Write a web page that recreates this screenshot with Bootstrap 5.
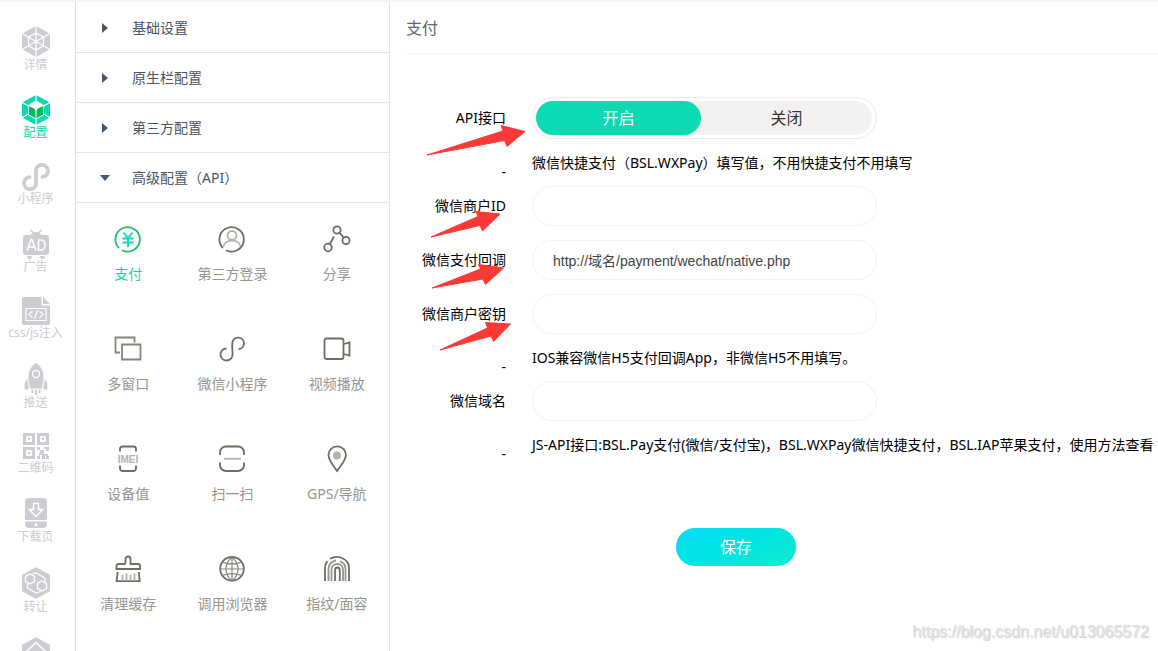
<!DOCTYPE html>
<html lang="zh-CN">
<head>
<meta charset="utf-8">
<meta name="viewport" content="width=device-width, initial-scale=1">
<title>支付</title>
<link rel="stylesheet" href="https://cdn.jsdelivr.net/npm/bootstrap@5.3.0/dist/css/bootstrap.min.css">
<style>
body{font-family:"Noto Sans","Noto Sans CJK SC",sans-serif;font-size:14px;line-height:20px;color:#000;background:#fff;font-kerning:none}
a{text-decoration:none}
svg{display:block}
.shell{border-top:2px solid #f5f5f5}
.rail{width:76px;border-right:1px solid #dcdce0;padding:24px 4px 0 0}
.rail-link{color:#cdccd2;font-size:12px;line-height:16px;margin-bottom:22px;white-space:nowrap}
.rail-link.active{color:#0cdab3}
.panel{width:314px;border-right:1px solid #e5e5e5}
.group-list{padding-top:1px}
.group-btn{height:50px;border:0;border-bottom:1px solid #e5e5e3;background:none;color:#475669;padding-left:24px}
.group-btn svg{width:12px;margin-right:20px}
.tool{height:110px;padding-top:22px;color:#97958f}
.tool svg{margin-bottom:11px;stroke:#6f6c64;fill:none;stroke-width:1.8}
.tool.active{color:#13d3b5}
.content{padding-left:16px}
.page-title{font-size:16px;line-height:24px;color:#666;font-weight:400;padding:14px 0;border-bottom:1px solid #f0f0f0;height:52px}
.pay-form{padding-top:43px}
.line{gap:26px}
.line-label{width:100px}
.field{width:345px;height:40px;border:1px solid #f1f1f1;border-radius:20px;padding:0 20px;font-family:"Liberation Sans","Noto Sans CJK SC",sans-serif;font-size:14px;color:#444}
.field-line{margin-bottom:14px}
.field-line.tight{margin-bottom:0}
.hint{height:47px}
.hint-dash{margin-bottom:4px}
.switch-box{width:345px;height:42px;border:1px solid #ebebeb;border-radius:21px;padding:3px 4px 3px 3px}
.switch-track{background:#f4f2f1;border-radius:17px;height:34px}
.switch-opt{border-radius:17px;font-size:16px;line-height:34px;color:#333;cursor:pointer}
.switch-on{width:165px}
.btn-check:checked+.switch-opt{background:#0cdab3;color:#fff}
.save{width:120px;height:38px;margin:60px 0 0 270px;border:0;border-radius:19px;color:#fff;font-size:16px;background:linear-gradient(160deg,#04dcf5,#02e6e0 55%,#12ebcb)}
.arrows{left:0;top:0;pointer-events:none}
.watermark{right:9px;bottom:8px;font:16px/22px "Liberation Sans",sans-serif;color:#e2e2e2;text-shadow:1px 1px 1px #cfcfcf}
</style>
</head>
<body>
<div class="shell d-flex vh-100 overflow-hidden">
  <nav class="rail d-flex flex-column flex-shrink-0" aria-label="主导航">
    <a class="rail-link d-flex flex-column align-items-center" href="#">
      <svg width="30" height="31" viewBox="0 0 30 31"><path fill="currentColor" d="M15 0l14 7.7v15.6L15 31 1 23.300V7.700z"/><path stroke="#fff" stroke-width="1.300" fill="none" d="M15 0v31M1 7.500l28 16M29 7.500l-28 16M15 7l7.500 4.200v8.600L15 24l-7.500-4.200v-8.600z"/></svg>
      <span>详情</span></a>
    <a class="rail-link active d-flex flex-column align-items-center" href="#">
      <svg width="30" height="30" viewBox="0 0 30 30"><path fill="currentColor" d="M15 0l14 7.500v15L15 30 1 22.500v-15z"/><path stroke="#fff" stroke-width="1.300" d="M15 0v30M1 7.500l28 15M29 7.500l-28 15"/><path fill="#fff" d="M15 5.500l8 4.500v10L15 24.500 7 20V10z"/><path fill="#00bd5e" d="M7.800 11.500c4 .5 6.700 2.500 6.700 5.500v6.300L7.800 19.500zM22.200 11.500c-4 .5-6.700 2.500-6.700 5.500v6.300l6.700-3.800z"/></svg>
      <span>配置</span></a>
    <a class="rail-link d-flex flex-column align-items-center" href="#">
      <svg width="28" height="28" viewBox="0 0 28 28"><path fill="none" stroke="currentColor" stroke-width="3.800" stroke-linecap="round" d="M7.500 14.200a6 6 0 1 0 6.500 6V7.800a6 6 0 1 1 6.500 6"/></svg>
      <span>小程序</span></a>
    <a class="rail-link d-flex flex-column align-items-center" href="#">
      <svg width="28" height="30" viewBox="0 0 28 30"><path stroke="currentColor" stroke-width="1.400" d="M8 1l4 3M20 1l-4 3"/><path fill="currentColor" d="M9 6c1-4 9-4 10 0zM4 6h20a3 3 0 0 1 3 3v14a3 3 0 0 1-3 3H4a3 3 0 0 1-3-3V9a3 3 0 0 1 3-3zM5 27h5l-1 3H6zM18 27h5l-1 3h-3z"/><path stroke="#fff" stroke-width="1.600" fill="none" d="M5 21.500l4-11h1l4 11M6.500 18h6M16.500 11v10h2.500c5.500 0 5.500-10 0-10z"/></svg>
      <span>广告</span></a>
    <a class="rail-link d-flex flex-column align-items-center" href="#">
      <svg width="28" height="28" viewBox="0 0 28 28"><path fill="currentColor" d="M2 0h17.500v8.500H28V26a2 2 0 0 1-2 2H2a2 2 0 0 1-2-2V2a2 2 0 0 1 2-2zM21 0l7 7h-7z"/><path stroke="#fff" stroke-width="1.200" fill="none" d="M4 11.500h20v12H4zM10.500 14L7 17.500l3.500 3.500M17.500 14l3.500 3.500-3.500 3.500M15.500 13.500l-3 8"/></svg>
      <span>css/js注入</span></a>
    <a class="rail-link d-flex flex-column align-items-center" href="#">
      <svg width="24" height="32" viewBox="0 0 24 32"><path fill="currentColor" d="M12 0c5 3 7.500 8 7.500 14 0 4-.5 8-2 11.500h-11C5 22 4.500 18 4.500 14 4.500 8 7 3 12 0zM3.700 16c0 4 .5 7 1.500 9.500L1 27c-1-5-.3-8 2.700-11zM20.300 16c0 4-.5 7-1.500 9.500L23 27c1-5 .3-8-2.700-11zM7.500 26.500h2V30h-2zM11 26.500h2V32h-2zM14.500 26.500h2V30h-2z"/><circle cx="12" cy="11" r="3.500" fill="none" stroke="#fff" stroke-width="1.300"/></svg>
      <span>推送</span></a>
    <a class="rail-link d-flex flex-column align-items-center" href="#">
      <svg width="26" height="27" viewBox="0 0 26 27"><path fill="currentColor" fill-rule="evenodd" d="M0 0h12v12H0zM3 3v6h6V3zM5 5h2v2H5zM14 0h12v12H14zM17 3v6h6V3zM19 5h2v2h-2zM0 14h12v12H0zM3 17v6h6v-6zM5 19h2v2H5zM14 14h3v3h-3zM17 17h4v4h4v2h-3v3h-3v-4h-2v4h-3v-3h2v-3h1zM21 14h5v4h-3v-2h-2zM23 23h3v3h-3z"/></svg>
      <span>二维码</span></a>
    <a class="rail-link d-flex flex-column align-items-center" href="#">
      <svg width="22" height="31" viewBox="0 0 22 31"><path fill="currentColor" d="M4 0h14a4 4 0 0 1 4 4v18H0V4a4 4 0 0 1 4-4zM0 23.500h22V26a4 4 0 0 1-4 4H4a4 4 0 0 1-4-4z"/><path stroke="#fff" stroke-width="1.400" fill="none" d="M8.500 5.500h5v6H18L11 18.500 4 11.500h4.500z"/><circle cx="11" cy="26.700" r="1.500" fill="#fff"/></svg>
      <span>下载页</span></a>
    <a class="rail-link d-flex flex-column align-items-center" href="#">
      <svg width="28" height="32" viewBox="0 0 28 32"><path fill="currentColor" stroke="currentColor" stroke-width="2" stroke-linejoin="round" d="M14 1.500l13 7v15l-13 7-13-7v-15z"/><g stroke="#fff" stroke-width="1.300" fill="none"><path d="M8 7l4.500 2.500v5L8 17l-4.500-2.500v-5zM20 14l4.500 2.500v5L20 24l-4.500-2.500v-5zM10.500 7l3.500-1 9 5v4.500M5.500 16.500V21l8.500 5 4.500-1.500"/></g></svg>
      <span>转让</span></a>
    <a class="rail-link d-flex flex-column align-items-center" href="#" aria-label="更多">
      <svg width="28" height="32" viewBox="0 0 28 32"><path fill="currentColor" stroke="currentColor" stroke-width="2" stroke-linejoin="round" d="M14 1.500l13 7v15l-13 7-13-7v-15z"/><path stroke="#fff" stroke-width="1.500" fill="none" d="M4 15L14 5.500 24 15"/></svg></a>
  </nav>

  <aside class="panel flex-shrink-0">
    <div class="group-list d-flex flex-column">
      <button type="button" class="group-btn d-flex align-items-center"><svg height="12" viewBox="0 0 12 12"><path fill="currentColor" d="M2 1l6 5-6 5z"/></svg>基础设置</button>
      <button type="button" class="group-btn d-flex align-items-center"><svg height="12" viewBox="0 0 12 12"><path fill="currentColor" d="M2 1l6 5-6 5z"/></svg>原生栏配置</button>
      <button type="button" class="group-btn d-flex align-items-center"><svg height="12" viewBox="0 0 12 12"><path fill="currentColor" d="M2 1l6 5-6 5z"/></svg>第三方配置</button>
      <button type="button" class="group-btn d-flex align-items-center"><svg height="12" viewBox="0 0 12 12"><path fill="currentColor" d="M0 3h10L5 9z"/></svg>高级配置（API）</button>
    </div>
    <div class="row row-cols-3 g-0">
      <a class="tool active col d-flex flex-column align-items-center" href="#"><svg width="28" height="28" viewBox="0 0 28 28"><path stroke="#1dc36b" stroke-width="1.800" d="M5 23a12.200 12.200 0 1 1 3 2.200"/><path stroke="#0cdab3" stroke-width="1.800" d="M9.500 7.500L14 13l4.500-5.500M8.500 13.500h11M8.500 17.500h11M14 13v9"/></svg>支付</a>
      <a class="tool col d-flex flex-column align-items-center" href="#"><svg width="28" height="28" viewBox="0 0 28 28"><path d="M5 23a12.200 12.200 0 1 1 3 2.200"/><g stroke="#b5b2aa"><circle cx="14" cy="10.500" r="4.500"/><path d="M5.500 21.500c1-8 16-8 17 0"/></g></svg>第三方登录</a>
      <a class="tool col d-flex flex-column align-items-center" href="#"><svg width="28" height="28" viewBox="0 0 28 28"><circle cx="14" cy="5" r="3.600"/><circle cx="5" cy="22.500" r="3.800"/><circle cx="23" cy="15.500" r="3.600"/><path d="M16.500 7.500l4 5M11 11.500L6.800 19"/></svg>分享</a>
      <a class="tool col d-flex flex-column align-items-center" href="#"><svg width="28" height="28" viewBox="0 0 28 28"><path stroke="#87847d" d="M6 17.500H1.500V2.500h19v5M8 9.500h18.500v15H8z"/></svg>多窗口</a>
      <a class="tool col d-flex flex-column align-items-center" href="#"><svg width="28" height="28" viewBox="0 0 28 28"><path d="M8.500 13.500a6 6 0 1 0 6 6.500c.4-4-1-9 0-13a5.800 5.800 0 1 1 6 7.200"/></svg>微信小程序</a>
      <a class="tool col d-flex flex-column align-items-center" href="#"><svg width="28" height="28" viewBox="0 0 28 28"><rect x="1.500" y="3.500" width="19" height="20.500" rx="2"/><path d="M21 9l5.500-1.500v13L21 19"/></svg>视频播放</a>
      <a class="tool col d-flex flex-column align-items-center" href="#"><svg width="28" height="28" viewBox="0 0 28 28"><path d="M6 6.500V4a2.500 2.500 0 0 1 2.500-2.500h11A2.500 2.500 0 0 1 22 4v2.500M6 20.500v3A2.500 2.500 0 0 0 8.500 26h11a2.500 2.500 0 0 0 2.500-2.500v-3"/><text x="14" y="17.500" text-anchor="middle" font-family="Liberation Sans" font-size="10" font-weight="700" stroke="none" fill="#b5b2aa">IMEI</text></svg>设备值</a>
      <a class="tool col d-flex flex-column align-items-center" href="#"><svg width="28" height="28" viewBox="0 0 28 28"><path d="M2 10V7.500a6 6 0 0 1 6-6h12a6 6 0 0 1 6 6V10M2 17.500V20a6 6 0 0 0 6 6h12a6 6 0 0 0 6-6v-2.500"/><path stroke="#b5b2aa" d="M6 13.800h17"/></svg>扫一扫</a>
      <a class="tool col d-flex flex-column align-items-center" href="#"><svg width="28" height="28" viewBox="0 0 28 28"><path d="M14 26C10 20 5.500 15.500 5.500 10a8.700 8.700 0 0 1 17.400 0c0 5.500-4.900 10-8.900 16z"/><circle cx="14" cy="10.500" r="4" fill="#b5b2aa" stroke="none"/></svg>GPS/导航</a>
      <a class="tool col d-flex flex-column align-items-center" href="#"><svg width="28" height="28" viewBox="0 0 28 28"><path d="M11.500 9V4a2.500 2.500 0 0 1 5 0v5H24a2 2 0 0 1 2 2v3H2.500v-3a2 2 0 0 1 2-2h7M3.500 17v2L2.500 26.200h23.200L25 19v-2"/><path stroke="#b5b2aa" d="M8.500 20v6M12.500 18.500V26M16.500 20v6M20.500 18.500V26"/></svg>清理缓存</a>
      <a class="tool col d-flex flex-column align-items-center" href="#"><svg width="28" height="28" viewBox="0 0 28 28"><circle cx="14" cy="13.800" r="11.800"/><path stroke="#87847d" stroke-width="1.200" d="M14 2v24M2 14h24M4.500 7c5 2.500 14 2.500 19 0M4.500 20.500c5-2.500 14-2.500 19 0M14 2c-8 7-8 17 0 24M14 2c8 7 8 17 0 24"/></svg>调用浏览器</a>
      <a class="tool col d-flex flex-column align-items-center" href="#"><svg width="28" height="28" viewBox="0 0 28 28"><path d="M2 26V13c0-2.500 1-5 2.500-6.800M7 3.800C15-1 26 4 26 13v13"/><path stroke="#97958f" d="M5.500 26V13.500C6.500 8 9.500 6 13 5.500M17 6.300c3.500 1.200 5.500 4 5.500 7.700v12M8.500 26V15c0-8 11.500-8 11.500 0v11"/><path d="M12 26V15.500c0-4 4.800-4 4.800 0V26"/></svg>指纹/面容</a>
    </div>
  </aside>

  <main class="content position-relative flex-grow-1 overflow-hidden">
    <h1 class="page-title mb-0">支付</h1>
    <form class="pay-form">
      <div class="line d-flex align-items-center">
        <span class="line-label text-end" id="api-label">API接口</span>
        <div class="switch-box" role="radiogroup" aria-labelledby="api-label">
          <div class="switch-track d-flex">
            <input class="btn-check" type="radio" name="api" id="api-on" checked><label class="switch-opt switch-on text-center" for="api-on">开启</label>
            <input class="btn-check" type="radio" name="api" id="api-off"><label class="switch-opt flex-grow-1 text-center" for="api-off">关闭</label>
          </div>
        </div>
      </div>
      <div class="line hint d-flex align-items-center">
        <span class="line-label hint-dash text-end align-self-end">-</span><span class="text-nowrap">微信快捷支付（BSL.WXPay）填写值，不用快捷支付不用填写</span>
      </div>
      <div class="line field-line d-flex align-items-center">
        <label class="line-label text-end" for="mch-id">微信商户ID</label><input class="field" id="mch-id" type="text">
      </div>
      <div class="line field-line d-flex align-items-center">
        <label class="line-label text-end" for="notify">微信支付回调</label><input class="field" id="notify" type="text" value="http://域名/payment/wechat/native.php">
      </div>
      <div class="line field-line tight d-flex align-items-center">
        <label class="line-label text-end" for="mch-key">微信商户密钥</label><input class="field" id="mch-key" type="text">
      </div>
      <div class="line hint d-flex align-items-center">
        <span class="line-label hint-dash text-end align-self-end">-</span><span class="text-nowrap">IOS兼容微信H5支付回调App，非微信H5不用填写。</span>
      </div>
      <div class="line field-line tight d-flex align-items-center">
        <label class="line-label text-end" for="domain">微信域名</label><input class="field" id="domain" type="text">
      </div>
      <div class="line hint d-flex align-items-center">
        <span class="line-label hint-dash text-end align-self-end flex-shrink-0">-</span><span class="text-nowrap">JS-API接口:BSL.Pay支付(微信/支付宝)，BSL.WXPay微信快捷支付，BSL.IAP苹果支付，使用方法查看</span>
      </div>
      <button type="submit" class="save">保存</button>
    </form>
    <svg class="arrows position-absolute" width="160" height="360" viewBox="390 2 160 360" aria-hidden="true">
      <g fill="#fb3a38" stroke="#fb3a38" stroke-linejoin="round">
        <path d="M427 155l76-24-2-5.500 24 6-18 15-2.500-6z"/>
        <path d="M431 237l47-20.500-2-5 24 2.500-17.500 17-2.500-5.500z"/>
        <path d="M432 288l48.500-19-2-4.500 25 3.500-18 16.500-2.500-5.500z"/>
        <path d="M440 350l47.500-22-2-5.500 25 1.500-17 17.500-2.500-5.500z"/>
      </g>
    </svg>
    <div class="watermark position-absolute">https://blog.csdn.net/u013065572</div>
  </main>
</div>
<script src="https://cdn.jsdelivr.net/npm/bootstrap@5.3.0/dist/js/bootstrap.bundle.min.js"></script>
</body>
</html>
